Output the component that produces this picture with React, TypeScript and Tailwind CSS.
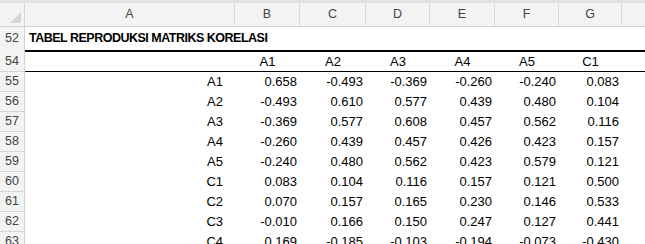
import React from 'react';

const cols = ['B', 'C', 'D', 'E', 'F', 'G'];
const widths = ['w-[65px]', 'w-[66px]', 'w-[64px]', 'w-[65px]', 'w-[64px]', 'w-[63px]'];
const heads = ['A1', 'A2', 'A3', 'A4', 'A5', 'C1'];

const rows: [number, string, string[]][] = [
  [55, 'A1', ['0.658', '-0.493', '-0.369', '-0.260', '-0.240', '0.083']],
  [56, 'A2', ['-0.493', '0.610', '0.577', '0.439', '0.480', '0.104']],
  [57, 'A3', ['-0.369', '0.577', '0.608', '0.457', '0.562', '0.116']],
  [58, 'A4', ['-0.260', '0.439', '0.457', '0.426', '0.423', '0.157']],
  [59, 'A5', ['-0.240', '0.480', '0.562', '0.423', '0.579', '0.121']],
  [60, 'C1', ['0.083', '0.104', '0.116', '0.157', '0.121', '0.500']],
  [61, 'C2', ['0.070', '0.157', '0.165', '0.230', '0.146', '0.533']],
  [62, 'C3', ['-0.010', '0.166', '0.150', '0.247', '0.127', '0.441']],
  [63, 'C4', ['0.169', '-0.185', '-0.103', '-0.194', '-0.073', '-0.430']],
];

function RowHead({ n, className = 'h-5' }: { n: number; className?: string }) {
  return (
    <div className={`w-[25px] shrink-0 flex items-center justify-center border-r border-b border-[#d4d4d4] bg-[#f3f3f3] text-[12.5px] text-[#444] ${className}`}>
      {n}
    </div>
  );
}

export default function App() {
  return (
    <div className="w-[645px] h-[244px] overflow-hidden bg-white font-['Liberation_Sans',Arial,sans-serif] text-[13px] text-black">
      <div className="h-[3px] bg-[#e1e1e1]" />

      {/* column letters */}
      <div className="flex h-6 bg-[#f3f3f3] border-b border-[#d4d4d4] text-[12.5px] text-[#444]">
        <div className="w-[25px] shrink-0 border-r border-[#d4d4d4] flex items-end justify-end p-[3px]">
          <svg width="11" height="11" viewBox="0 0 11 11">
            <polygon points="11,0 11,11 0,11" fill="#d6d6d6" />
          </svg>
        </div>
        <div className="w-[210px] shrink-0 border-r border-[#dadada] flex items-center justify-center">A</div>
        {cols.map((c, i) => (
          <div key={c} className={`${widths[i]} shrink-0 border-r border-[#dadada] flex items-center justify-center`}>
            {c}
          </div>
        ))}
        <div className="flex-1" />
      </div>

      {/* row 52 */}
      <div className="flex h-[23px]">
        <RowHead n={52} className="h-[23px] border-b-0" />
        <div className="flex-1 flex items-center pl-[4px] font-bold tracking-[-0.5px] text-[12.5px]">
          TABEL REPRODUKSI MATRIKS KORELASI
        </div>
      </div>

      {/* row 54 */}
      <div className="flex h-[22px]">
        <RowHead n={54} className="h-[22px] pt-[2px]" />
        <div className="flex-1 flex border-t-2 border-b border-black">
          <div className="w-[210px] shrink-0" />
          {heads.map((h, i) => (
            <div key={h} className={`${widths[i]} shrink-0 flex items-center justify-center`}>
              {h}
            </div>
          ))}
        </div>
      </div>

      {rows.map(([n, label, vals]) => (
        <div key={n} className="flex h-5">
          <RowHead n={n} />
          <div className="w-[210px] shrink-0 flex items-center justify-end pr-[12px]">{label}</div>
          {vals.map((v, i) => (
            <div key={i} className={`${widths[i]} shrink-0 flex items-center justify-end pr-[3px]`}>
              {v}
            </div>
          ))}
        </div>
      ))}
    </div>
  );
}
